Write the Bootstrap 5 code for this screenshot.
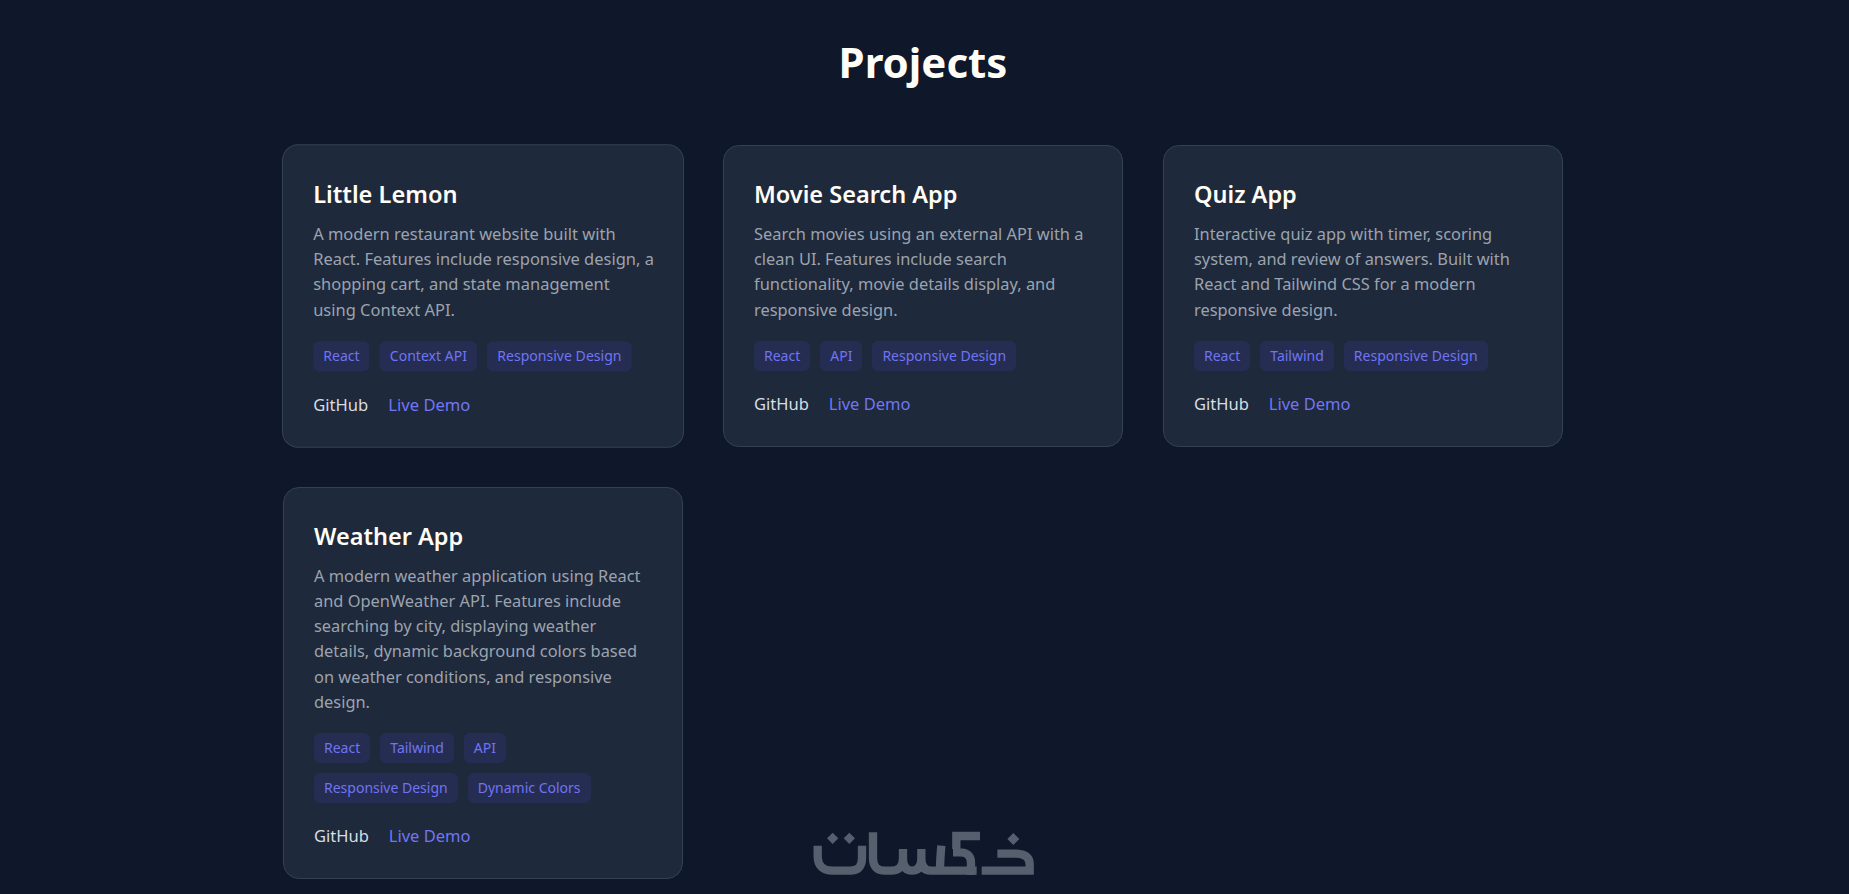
<!DOCTYPE html>
<html lang="en">
<head>
  <meta charset="UTF-8">
  <meta name="viewport" content="width=device-width, initial-scale=1">
  <title>Projects</title>
  <link href="https://cdn.jsdelivr.net/npm/bootstrap@5.3.3/dist/css/bootstrap.min.css" rel="stylesheet">
  <script src="https://cdn.jsdelivr.net/npm/bootstrap@5.3.3/dist/js/bootstrap.bundle.min.js"></script>
  <style>
    body { background-color: #0f172a; font-family: "Noto Sans", "Open Sans", sans-serif; overflow: hidden; height: 894px; padding-right: 3px; }
    .page-wrap { width: 1280px; padding-top: 32px; }
    .page-title { font-size: 42px; font-weight: 700; color: #fffdf5; line-height: 60px; margin-bottom: 53px; }
    .project-grid { display: grid; grid-template-columns: repeat(3, 400px); gap: 40px; align-items: start; }
    .project-card { background: #1e293b; border: 1px solid #334155; border-radius: 16px; padding: 30px; }
    .project-card.is-hover { transform: scale(1.005); }
    .project-name { font-size: 23.5px; font-weight: 600; line-height: 36px; color: #fffdf5; margin-bottom: 9px; }
    .project-text { font-size: 16.4px; line-height: 25.2px; color: #9ca3af; margin-bottom: 19px; white-space: nowrap; }
    .tag-list { gap: 10px; }
    .tag-chip { font-size: 14px; line-height: 20px; padding: 5px 10px; border-radius: 6px; background: #252d52; color: #7074f2; }
    .link-row { margin-top: 20px; font-size: 16.5px; line-height: 25px; gap: 20px; }
    .link-row a { text-decoration: none; }
    .link-gh { color: #d8dde4; }
    .link-demo { color: #7276f5; }
    .logo-mark { position: fixed; left: 800px; top: 825px; }
  </style>
</head>
<body>
<div class="page-wrap mx-auto">
  <h1 class="page-title text-center">Projects</h1>
  <div class="project-grid" id="grid"></div>
</div>

<svg class="logo-mark" width="240" height="60" viewBox="0 0 720 180" fill="none" stroke="#555f6e" stroke-width="25">
  <path d="M53 62V92Q53 137 98 137H150Q186 137 186 100V62"/>
  <path d="M219 22V100Q219 137 256 137H272Q309 137 309 100V72M309 100Q309 137 336 137Q364 137 364 100V72M364 100Q364 137 392 137H530M420 137Q420 110 424 62"/>
  <path d="M540 33H469V72M459 82H480Q513 82 513 114V150"/>
  <path d="M545 137H689V118Q689 88 650 86H592"/>
  <path fill="#555f6e" stroke="none" d="M81 40L98 23L115 40L98 57ZM131 40L148 23L165 40L148 57ZM622 42L640 24L658 42L640 60Z"/>
</svg>

<script>
const projects = [
  { name: "Little Lemon", lines: ["A modern restaurant website built with", "React. Features include responsive design, a", "shopping cart, and state management", "using Context API."], tags: ["React", "Context API", "Responsive Design"], hover: true },
  { name: "Movie Search App", lines: ["Search movies using an external API with a", "clean UI. Features include search", "functionality, movie details display, and", "responsive design."], tags: ["React", "API", "Responsive Design"] },
  { name: "Quiz App", lines: ["Interactive quiz app with timer, scoring", "system, and review of answers. Built with", "React and Tailwind CSS for a modern", "responsive design."], tags: ["React", "Tailwind", "Responsive Design"] },
  { name: "Weather App", lines: ["A modern weather application using React", "and OpenWeather API. Features include", "searching by city, displaying weather", "details, dynamic background colors based", "on weather conditions, and responsive", "design."], tags: ["React", "Tailwind", "API", "Responsive Design", "Dynamic Colors"] }
];
document.getElementById("grid").innerHTML = projects.map(p => `
  <div class="project-card${p.hover ? " is-hover" : ""}">
    <h3 class="project-name">${p.name}</h3>
    <p class="project-text">${p.lines.join("<br>")}</p>
    <div class="tag-list d-flex flex-wrap">${p.tags.map(t => `<span class="tag-chip">${t}</span>`).join("")}</div>
    <div class="link-row d-flex"><a class="link-gh" href="#">GitHub</a><a class="link-demo" href="#">Live Demo</a></div>
  </div>`).join("");
</script>
</body>
</html>
